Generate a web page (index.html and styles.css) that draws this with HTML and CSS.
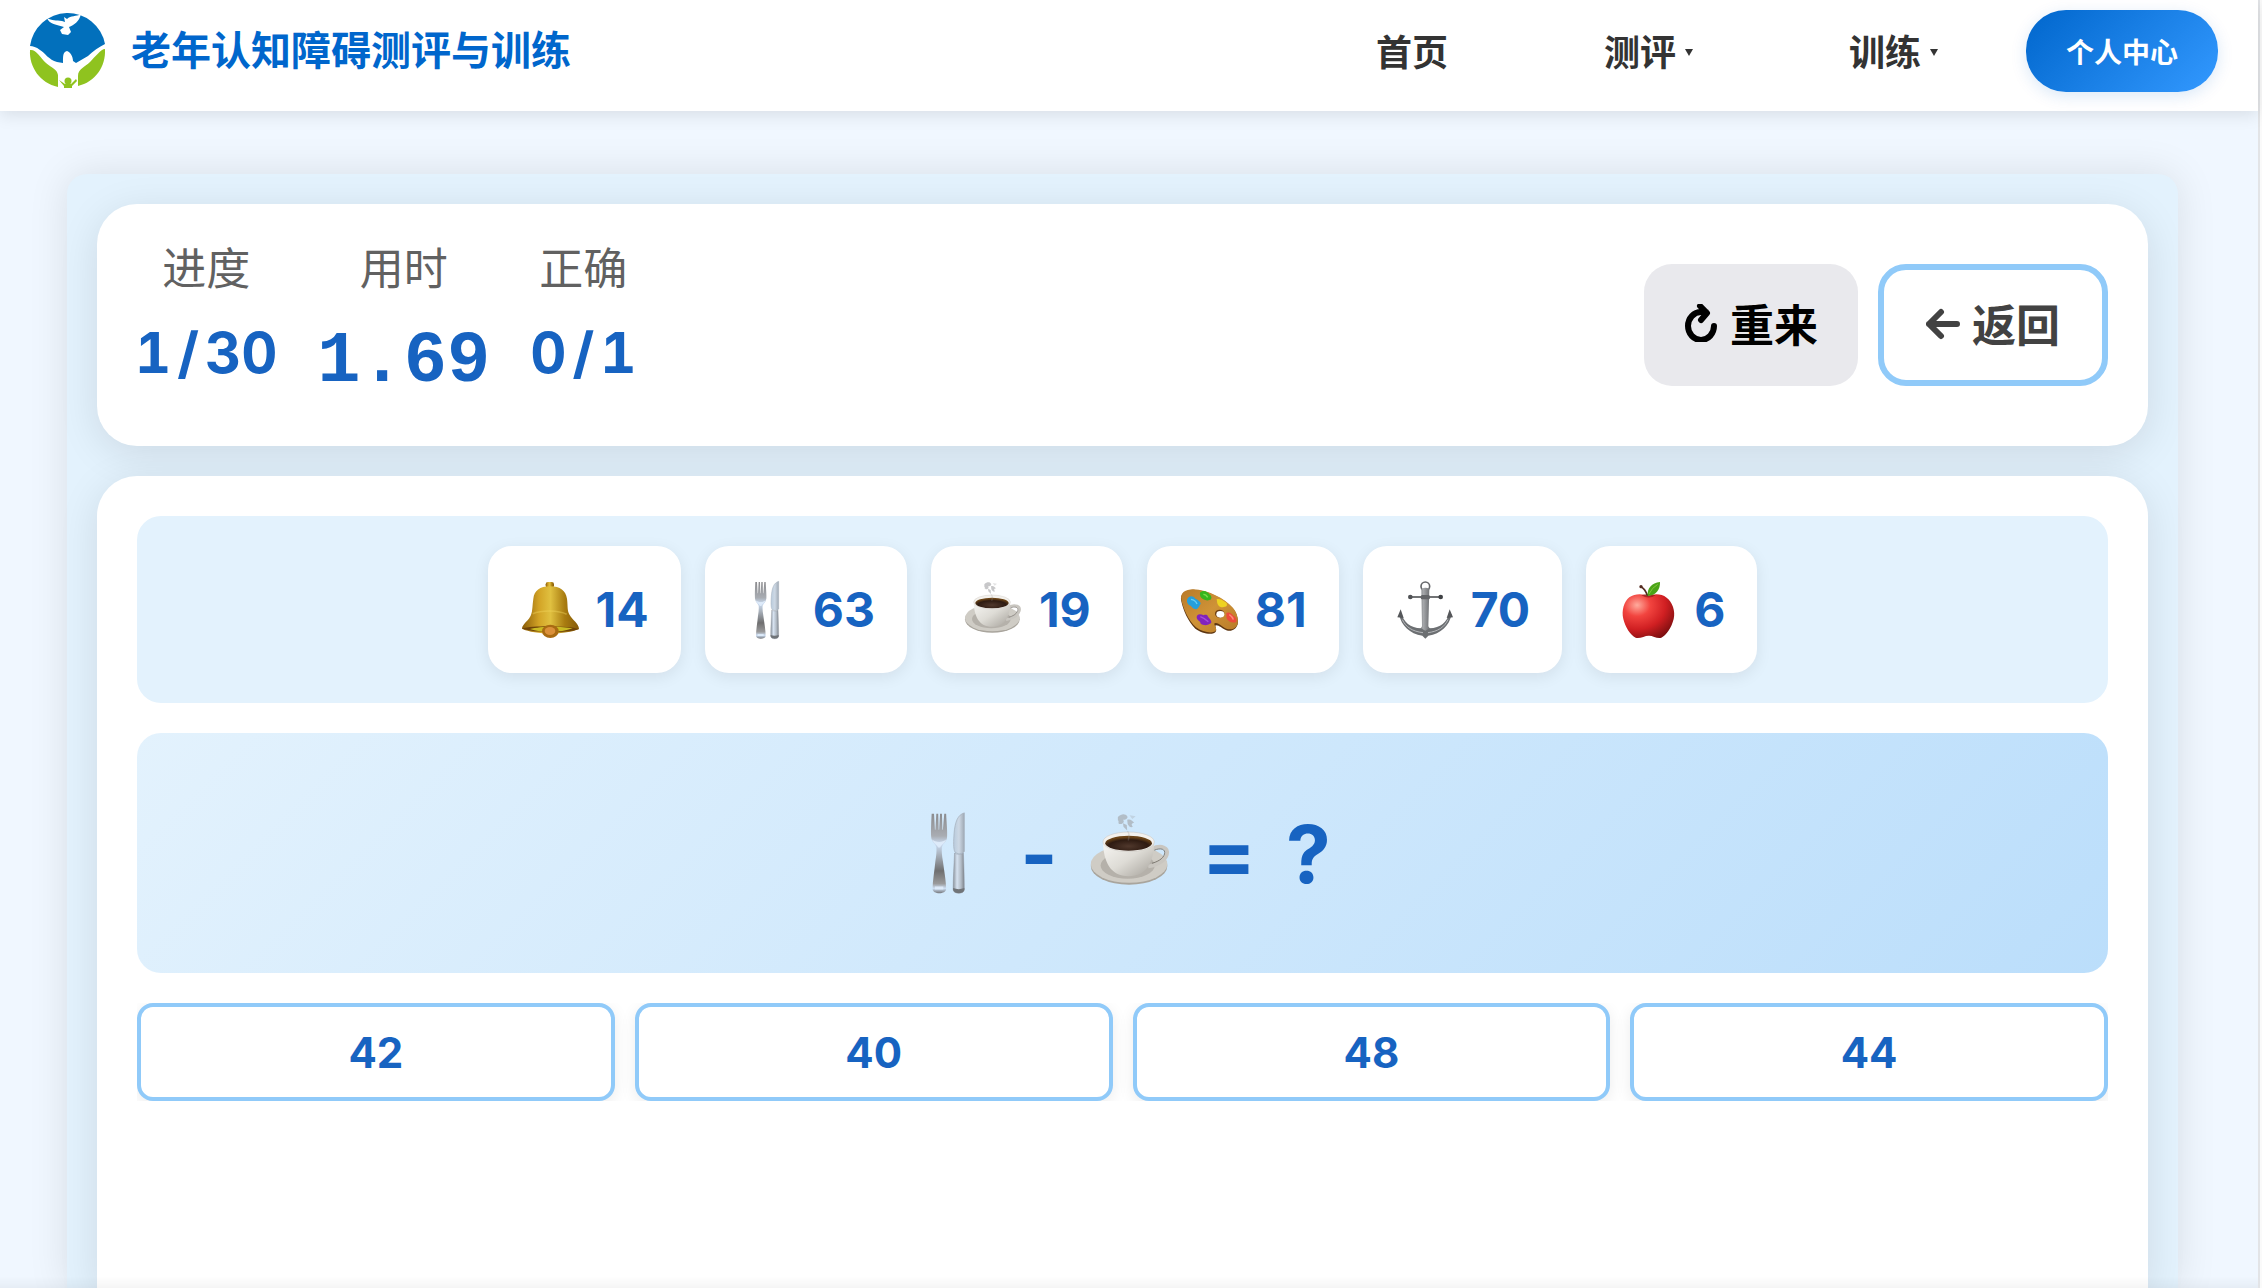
FILE: index.html
```html
<!DOCTYPE html>
<html lang="zh-CN">
<head>
<meta charset="UTF-8">
<meta name="viewport" content="width=device-width, initial-scale=1">
<title>老年认知障碍测评与训练</title>
<link rel="stylesheet" href="styles.css">
</head>
<body>
<svg class="sprite" aria-hidden="true">
  <defs>
    <linearGradient id="gold" x1="0" x2="1" y1="0" y2="0"><stop offset="0" stop-color="#8a5c08"/><stop offset=".3" stop-color="#d3a426"/><stop offset=".5" stop-color="#e0c040"/><stop offset=".75" stop-color="#a97c10"/><stop offset="1" stop-color="#84590a"/></linearGradient>
    <linearGradient id="steel" x1="0" x2="0" y1="0" y2="1"><stop offset="0" stop-color="#8b8b8e"/><stop offset=".28" stop-color="#a9adb3"/><stop offset=".38" stop-color="#cbdcf2"/><stop offset=".52" stop-color="#a8b0ba"/><stop offset=".72" stop-color="#6f6f70"/><stop offset=".88" stop-color="#9a9a9b"/><stop offset=".94" stop-color="#cfe0f5"/><stop offset="1" stop-color="#77797d"/></linearGradient>
    <linearGradient id="handle" x1="0" x2="1" y1="0" y2="0"><stop offset="0" stop-color="#8b939c"/><stop offset=".35" stop-color="#d6e2f0"/><stop offset=".7" stop-color="#b3bcc6"/><stop offset="1" stop-color="#7c828a"/></linearGradient>
    <linearGradient id="blade" x1="0" x2="1" y1="0" y2="0"><stop offset="0" stop-color="#b9cbdd"/><stop offset=".5" stop-color="#cdd8e4"/><stop offset="1" stop-color="#9fa9b4"/></linearGradient>
    <linearGradient id="china" x1="0" x2="1" y1="0" y2="1"><stop offset="0" stop-color="#f7f6f3"/><stop offset=".5" stop-color="#dedcd6"/><stop offset="1" stop-color="#a5a19a"/></linearGradient>
    <radialGradient id="coffee" cx=".5" cy=".7" r=".6"><stop offset="0" stop-color="#50382c"/><stop offset=".7" stop-color="#2e1b12"/><stop offset="1" stop-color="#6b4417"/></radialGradient>
    <linearGradient id="wood" x1="0" x2="1" y1="0" y2="1"><stop offset="0" stop-color="#b97a28"/><stop offset=".5" stop-color="#cf9337"/><stop offset="1" stop-color="#b87a27"/></linearGradient>
    <linearGradient id="iron" x1="0" x2="1" y1="0" y2="0"><stop offset="0" stop-color="#55575a"/><stop offset=".4" stop-color="#a5a7aa"/><stop offset="1" stop-color="#3f4144"/></linearGradient>
    <radialGradient id="red" cx=".28" cy=".25" r=".85"><stop offset="0" stop-color="#ffab9d"/><stop offset=".3" stop-color="#f2443f"/><stop offset=".65" stop-color="#d01f22"/><stop offset="1" stop-color="#7e0f10"/></radialGradient>
  </defs>
  <symbol id="cutlery" viewBox="771 147 180 180">
    <path fill="url(#steel)" d="M826 153h5l2 34h1l2-34h4l1 34h1l2-34h4l1 34h1l3-34h4c1 20 3 38 2 50-1 10-9 14-11 21-1 8 0 18 2 30 3 22 7 44 7 60 0 12-29 12-29 0 0-18 4-38 6-60 2-12 3-22 2-30-2-7-10-11-11-21-1-12 0-30 1-50z"/>
    <path fill="#e2effd" opacity=".8" d="M827 208c8 7 22 7 30 0-2 8-9 9-13 17h-4c-4-8-11-9-13-17zM833 309h18v6h-18z"/>
    <path fill="url(#blade)" stroke="#a5afba" stroke-width="1.500" d="M896 151v83c-5 6-15 6-20 1-4-6-3-25-2-40 2-25 8-40 22-44z"/>
    <path fill="url(#handle)" stroke="#8f969f" stroke-width="1" d="M875 237c6 4 14 4 19 0 1 25 2 55 2 78 0 11-24 11-24 0 0-23 2-53 3-78z"/>
    <path fill="#707478" d="M872 312q12 5 24 0v4c-2 10-22 10-24 0z"/>
  </symbol>
  <symbol id="cup" viewBox="153 147 180 180">
    <ellipse cx="241" cy="265" rx="82" ry="40" fill="#a9a59d"/>
    <ellipse cx="241" cy="261" rx="82" ry="40" fill="#cfccc5"/>
    <ellipse cx="238" cy="264" rx="58" ry="28" fill="#b5b1aa"/>
    <path fill="none" stroke="#c9c6c0" stroke-width="8" d="M290 228c20-10 36-2 32 12-4 15-22 22-40 26"/>
    <path fill="none" stroke="#77736c" stroke-width="2" d="M295 231c14-6 25-2 22 8-3 11-16 17-27 20"/>
    <path fill="url(#china)" d="M185 212c1 44 16 75 55 75s54-31 55-75z"/>
    <ellipse cx="240" cy="213" rx="55" ry="21" fill="#f3f1ed" stroke="#c4c0b9" stroke-width="1"/>
    <ellipse cx="240" cy="216" rx="50" ry="16" fill="url(#coffee)"/>
    <g fill="#9b9b9d" opacity=".55"><path d="M217 160c8-8 16-7 20-2 3 5-4 8-9 8 4 4 0 9-6 9-7-1-1-6-5-8zM237 166c7-3 10 2 15 6-6 1-7 4-3 9-5 3-9-2-11-6zM228 173l8 4 1 12-8-8z"/><path opacity=".5" d="M236 190c5 6 3 12 2 20h3c2-8 3-14-2-20zM242 156l13 2-7 6z"/></g>
  </symbol>
  <symbol id="bell" viewBox="120 147 180 180">
    <rect x="197" y="153" width="25" height="18" rx="7" fill="url(#gold)"/>
    <path fill="url(#gold)" d="M160 203c3-24 19-37 50-37s47 13 51 37c3 24 0 35 8 49 8 15 28 26 28 42-40 18-132 18-171-1 0-13 22-26 27-41 5-13 4-29 7-49z"/>
    <path fill="#704409" d="M126 292c32-9 140-9 171 2-40 13-136 13-171-2z"/>
    <path fill="#cabb24" d="M150 294c30-8 90-9 128-2-35 14-94 14-128 2z"/>
    <path fill="none" stroke="#f3d760" stroke-width="5" opacity=".4" d="M158 248c27-11 77-11 102 2"/>
    <ellipse cx="211" cy="301" rx="25" ry="20" fill="#a96b12"/>
    <ellipse cx="210" cy="300" rx="16" ry="12" fill="#db903a"/>
  </symbol>
  <symbol id="palette" viewBox="807 147 180 180">
    <path fill="#5d3510" d="M814 211c-6-23 12-34 35-35 45 2 95 27 118 54 12 13 19 32 16 50-5 16-19 23-34 18-13-5-20-15-31-15-5 2 3 9 0 18-8 14-43 7-62-8-22-21-37-57-42-82z"/>
    <path fill="url(#wood)" d="M814 206c-4-21 13-31 35-31 45 2 95 27 118 54 13 14 20 34 15 52-6 13-19 17-33 12-13-5-20-16-32-17-11 0 4 12 1 22-6 12-41 6-60-9-23-21-39-58-44-83z"/>
    <ellipse cx="929" cy="248" rx="14" ry="12" fill="#6b3e12"/><ellipse cx="931" cy="250" rx="12" ry="10" fill="#fff"/>
    <path fill="#269fda" d="M831 207c4-14 18-14 25-4 9 4 17 10 16 16-4 3-5 14-14 16-12-1-13-11-20-12-5-3-8-10-7-16z"/><path fill="none" stroke="#64cdf5" stroke-width="4" d="M843 205c8 1 15 7 18 14"/>
    <path fill="#36b51d" d="M870 185c7-9 22-6 28 5 6 3 8 11 5 15-5 4-15 5-23 0-9-5-11-12-10-20z"/><path fill="none" stroke="#78dd4b" stroke-width="4" d="M880 190c7 0 11 5 13 9"/>
    <path fill="#eed321" d="M920 205c7-3 17 2 24 7 7 2 8 8 6 13-5 4-17 6-24-1-6-6-4-12-6-19z"/>
    <path fill="#ec4b3c" d="M949 246c7-5 17 2 21 8 8 3 11 12 9 18-6 5-18 3-25-4-7-7-4-14-5-22z"/><path fill="none" stroke="#ff8a78" stroke-width="4" d="M958 251c6 4 11 9 12 15"/>
    <path fill="#8123bb" d="M860 259c0-11 12-11 21-6 5-3 12-1 13 4l8 10c4 7 2 11-4 12-6 6-22 3-26-1 0-7-12-10-12-19z"/><path fill="none" stroke="#a54ddd" stroke-width="4" d="M871 257c10 4 18 9 24 15"/>
  </symbol>
  <symbol id="anchor" viewBox="168 147 180 180">
    <circle cx="259" cy="166" r="13" fill="none" stroke="#66686b" stroke-width="5"/>
    <path fill="url(#iron)" d="M247 174q12-8 24 0l-3 112q6 12 20 15l-29 14-29-14q14-3 19-15z"/>
    <path stroke="#55575a" stroke-width="5" d="M214 198h91"/><rect x="245" y="192" width="28" height="13" rx="5" fill="#636568"/>
    <circle cx="214" cy="198" r="7" fill="#505255"/><circle cx="305" cy="198" r="7" fill="#3f4144"/>
    <path fill="#6c6f72" d="M180 250l8-2c5 24 26 43 58 44l13 7 13-7c32-1 53-20 58-44l8 2c-7 34-32 59-70 64l-9 9-9-9c-38-5-63-30-70-64z"/>
    <path fill="none" stroke="#b4b6b9" stroke-width="3" d="M190 266c11 23 30 35 62 39M327 266c-11 23-30 35-60 39"/>
    <path fill="#55575a" d="M185 235l9 26-19-2zM332 235l10 24-19 2z"/>
  </symbol>
  <symbol id="apple" viewBox="831 147 180 180">
    <path fill="url(#red)" d="M922 195c14-7 38-9 55 5 17 13 27 40 21 64-7 28-22 48-37 56-13 4-26-7-38-6-12 0-27 10-39 6-16-8-31-31-37-56-6-26 2-52 18-65 17-13 42-11 57-4z"/>
    <path fill="#6b0e0c" opacity=".5" d="M901 193q21-9 43 0-21 13-43 0z"/>
    <path fill="none" stroke="#542b20" stroke-width="5" stroke-linecap="round" d="M900 167q12 6 19 26"/><circle cx="900" cy="167" r="5" fill="#542b20"/>
    <path fill="#4ba418" d="M920 195c-2-24 12-39 37-42 1 24-13 40-37 42z"/><path fill="none" stroke="#81c83a" stroke-width="3" d="M924 189q9-19 26-29"/>
  </symbol>
</svg>

<div class="page">
  <header class="header">
    <a class="brand" href="#">
      <svg class="brand-logo" viewBox="29 12 77 77" aria-hidden="true">
        <path fill="#0270bc" d="M30 46A38 38 0 0 1 105 44C99 47 93 51 88 56L76 63 73 61C73 56 70 52 67 51 63 52 63 55 63 63L57 62C49 60 45 53 40 50 36 47 33 46 30 46Z"/>
        <path fill="#8fc31f" d="M30 50C36 49 40 57 46 63 52 68 57 69 58 75L58 87C40 83 29 67 30 50ZM105 49C101 49 95 57 90 62 85 67 78 69 78 76L78 86C95 82 106 67 105 49Z"/>
        <path fill="#fff" d="M47 18C52 21 56 20 62 21L65 22 64 17 67 19C71 15 76 17 81 14 79 22 74 25 69 27L71 32 68 35 62 34 60 30 64 27C57 25 49 24 47 18Z"/>
        <circle cx="68" cy="81" r="3.500" fill="#8fc31f"/>
        <path fill="#8fc31f" d="M59 80L65 84H71L76 79 77 81 72 86V88H64V86Z"/>
      </svg>
      <span>老年认知障碍测评与训练</span>
    </a>
    <nav class="nav">
      <a class="nav-link" href="#">首页</a>
      <a class="nav-link" href="#">测评<span class="caret"></span></a>
      <a class="nav-link" href="#">训练<span class="caret"></span></a>
      <button class="profile" type="button">个人中心</button>
    </nav>
  </header>

  <main class="main">
    <div class="game">
      <section class="card status">
        <dl class="stats">
          <div class="stat"><dt>进度</dt><dd>1<span class="slash">/</span>30</dd></div>
          <div class="stat"><dt>用时</dt><dd class="timer">1.69</dd></div>
          <div class="stat"><dt>正确</dt><dd>0<span class="slash">/</span>1</dd></div>
        </dl>
        <div class="actions">
          <button class="action restart" type="button">
            <svg class="action-icon" viewBox="0 0 34 38" aria-hidden="true"><path d="M30 22A13 14 0 1 1 17 8H22M16 2L23 9 17 16"/></svg>
            重来
          </button>
          <button class="action back" type="button">
            <svg class="action-icon" viewBox="0 0 34 38" aria-hidden="true"><path d="M3 20H31M15 8L3 20 15 32"/></svg>
            返回
          </button>
        </div>
      </section>

      <section class="card board">
        <ul class="legend">
          <li class="chip"><svg class="icon"><use href="#bell"/></svg>14</li>
          <li class="chip"><svg class="icon"><use href="#cutlery"/></svg>63</li>
          <li class="chip"><svg class="icon"><use href="#cup"/></svg>19</li>
          <li class="chip"><svg class="icon"><use href="#palette"/></svg>81</li>
          <li class="chip"><svg class="icon"><use href="#anchor"/></svg>70</li>
          <li class="chip"><svg class="icon"><use href="#apple"/></svg>6</li>
        </ul>
        <div class="question">
          <svg class="icon-large"><use href="#cutlery"/></svg>
          <span>-</span>
          <svg class="icon-large"><use href="#cup"/></svg>
          <span>=</span>
          <span>?</span>
        </div>
        <div class="answers">
          <button class="answer" type="button">42</button>
          <button class="answer" type="button">40</button>
          <button class="answer" type="button">48</button>
          <button class="answer" type="button">44</button>
        </div>
      </section>
    </div>
  </main>
  <div class="bottom-edge"></div>
</div>
</body>
</html>
```
FILE: styles.css
```css
* { box-sizing: border-box; }

body {
  margin: 0;
  background: #fafafa;
  font-family: Inter, "Noto Sans CJK SC", sans-serif;
  color: #333;
}

button { font-family: inherit; cursor: pointer; }
a { color: inherit; text-decoration: none; }

.sprite { position: absolute; width: 0; height: 0; }

.page {
  display: flex;
  flex-direction: column;
  min-height: 100vh;
  margin-right: 2px;
  border-right: 2px solid #e2e4e7;
  background: #f0f7ff;
}

.header {
  display: flex;
  align-items: center;
  justify-content: space-between;
  height: 111px;
  padding: 0 40px 10px 29px;
  background: #fff;
  box-shadow: 0 4px 16px rgba(0, 0, 0, 0.1);
}

.brand {
  display: flex;
  align-items: center;
  gap: 25px;
  font-size: 40px;
  font-weight: 700;
  line-height: 60px;
  color: #0066cc;
}

.brand-logo { width: 77px; height: 77px; }

.nav { display: flex; align-items: center; }

.nav-link {
  display: flex;
  align-items: center;
  gap: 9px;
  margin-right: 156px;
  padding-top: 4px;
  font-size: 36px;
  font-weight: 600;
  line-height: 56px;
}

.nav-link:nth-of-type(3) { margin-right: 88px; }

.caret {
  border: 4px solid transparent;
  border-top: 7px solid #333;
  border-bottom: 0;
}

.profile {
  height: 82px;
  padding: 0 40px;
  border: 0;
  border-radius: 40px;
  background: linear-gradient(135deg, #0066cc, #3399ff);
  box-shadow: 0 4px 16px rgba(0, 102, 204, 0.15);
  font-size: 28px;
  font-weight: 600;
  color: #fff;
}

.main {
  display: flex;
  flex: 1;
  padding: 63px 80px 0 67px;
}

.game {
  display: flex;
  flex: 1;
  flex-direction: column;
  gap: 30px;
  padding: 30px 30px 0;
  border-radius: 20px 20px 0 0;
  background: #e3f2fd;
  box-shadow: 0 0 40px rgba(0, 0, 0, 0.1);
}

.card {
  border-radius: 40px;
  background: #fff;
  box-shadow: 0 8px 40px rgba(0, 0, 0, 0.1);
}

.status {
  display: flex;
  align-items: center;
  justify-content: space-between;
  height: 242px;
  padding: 0 40px 0 38px;
}

.stats {
  display: flex;
  gap: 40px;
  height: 172px;
  margin: 0;
}

.stat { text-align: center; }

.stat dt {
  font-size: 44px;
  line-height: 60px;
  color: #616161;
}

.stat dd {
  margin: 20px 0 0;
  font-size: 56px;
  font-weight: 700;
  line-height: 68px;
  font-variant-numeric: tabular-nums;
  color: #1763c1;
}

.slash { padding: 0 6px; }

.stat .timer {
  font-family: "Liberation Mono", monospace;
  font-size: 72px;
  line-height: 86px;
}

.actions { display: flex; gap: 20px; }

.action {
  display: flex;
  align-items: center;
  gap: 12px;
  height: 122px;
  padding: 0 40px 4px;
  border: 0;
  border-radius: 28px;
  font-size: 44px;
  font-weight: 700;
}

.action-icon {
  width: 34px;
  height: 38px;
  fill: none;
  stroke: currentColor;
  stroke-width: 6;
  stroke-linecap: round;
  stroke-linejoin: round;
}

.restart { background: #e9e9ed; color: #000; }
.back { padding: 0 42px 4px; border: 6px solid #90caf9; background: #fff; color: #424242; }

.board {
  display: flex;
  flex: 1;
  flex-direction: column;
  gap: 30px;
  padding: 40px;
  border-radius: 40px 40px 0 0;
}

.legend {
  display: flex;
  justify-content: center;
  gap: 24px;
  margin: 0;
  padding: 30px;
  border-radius: 24px;
  background: #e3f2fd;
  list-style: none;
}

.chip {
  display: flex;
  align-items: center;
  gap: 16px;
  height: 127px;
  padding: 0 32px;
  border-radius: 24px;
  background: #fff;
  box-shadow: 0 4px 16px rgba(0, 0, 0, 0.08);
  font-size: 48px;
  font-weight: 700;
  color: #1763c1;
}

.icon { width: 60px; height: 60px; }
.icon-large { width: 84px; height: 84px; }

.question {
  display: flex;
  align-items: center;
  justify-content: center;
  gap: 30px;
  height: 240px;
  padding-right: 8px;
  border-radius: 24px;
  background: linear-gradient(135deg, #e3f2fd, #bbdefb);
  font-size: 80px;
  font-weight: 700;
  color: #1763c1;
}

.answers {
  display: grid;
  grid-template-columns: repeat(4, 1fr);
  gap: 20px;
  overflow: hidden;
}

.answer {
  height: 98px;
  border: 4px solid #90caf9;
  border-radius: 16px;
  background: #fff;
  box-shadow: 0 4px 16px rgba(0, 0, 0, 0.08);
  font-size: 42px;
  font-weight: 700;
  color: #1763c1;
}

.bottom-edge {
  position: fixed;
  right: 4px;
  bottom: 0;
  left: 0;
  height: 12px;
  background: linear-gradient(transparent, rgba(0, 0, 0, 0.04));
}
```
